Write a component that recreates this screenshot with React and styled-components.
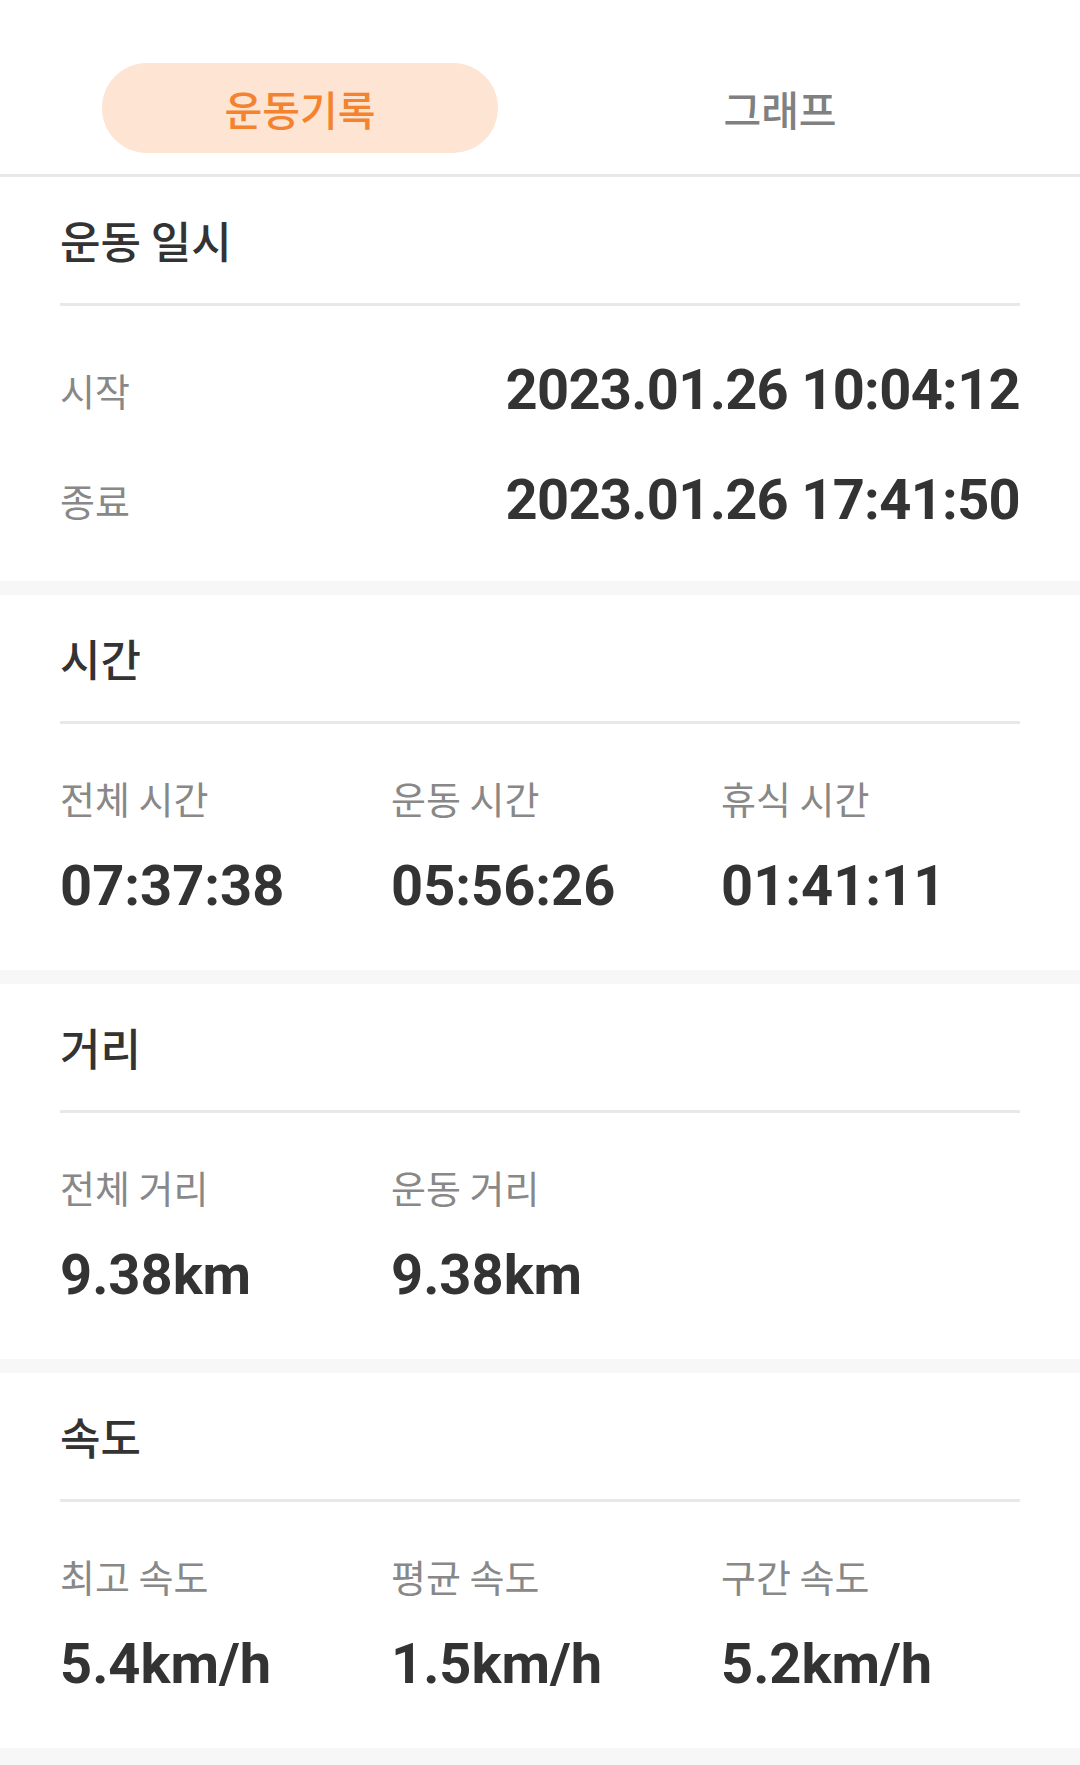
import React from "react";
import styled, { createGlobalStyle } from "styled-components";

const GlobalStyle = createGlobalStyle`
  html, body {
    margin: 0;
    padding: 0;
    background: #f7f7f7;
  }
  body {
    font-family: "Noto Sans CJK KR", "Noto Sans", sans-serif;
    -webkit-font-smoothing: antialiased;
  }
  * { box-sizing: border-box; }
`;

const Page = styled.div`
  width: 1080px;
  min-height: 1765px;
  background: #f7f7f7;
  display: flex;
  flex-direction: column;
  gap: 14px;
`;

const TabBar = styled.nav`
  display: grid;
  grid-template-columns: 1fr 1fr;
  padding: 63px 60px 21px;
  background: #fff;
  border-bottom: 3px solid #e8e8e8;
  margin-bottom: -14px;
`;

const Tab = styled.button`
  justify-self: center;
  width: 396px;
  height: 90px;
  border: none;
  border-radius: 45px;
  background: ${(p) => (p.$active ? "#fde4d3" : "transparent")};
  color: ${(p) => (p.$active ? "#f4832f" : "#808080")};
  font-family: "Noto Sans CJK KR", sans-serif;
  font-size: 41px;
  font-weight: 500;
  line-height: 1;
  padding: 0;
  cursor: pointer;
`;

const Card = styled.section`
  background: #fff;
`;

const CardTitle = styled.h2`
  margin: 0;
  height: 126px;
  padding: 0 60px;
  display: flex;
  align-items: center;
  font-family: "Noto Sans CJK KR", sans-serif;
  font-size: 44px;
  font-weight: 500;
  color: #333;
`;

const Divider = styled.hr`
  margin: 0 60px;
  border: none;
  height: 3px;
  background: #e8e8e8;
`;

const RowList = styled.div`
  display: flex;
  flex-direction: column;
  gap: 50px;
  padding: 54px 60px 51px;
`;

const Row = styled.div`
  display: flex;
  justify-content: space-between;
  align-items: center;
  height: 60px;
`;

const Label = styled.span`
  font-family: "Noto Sans CJK KR", sans-serif;
  font-size: 38px;
  font-weight: 400;
  color: #888;
  line-height: 48px;
`;

const Value = styled.span`
  font-family: Roboto, "Liberation Sans", sans-serif;
  font-size: 56px;
  font-weight: 700;
  color: #333;
  line-height: 60px;
  white-space: nowrap;
  letter-spacing: ${(p) => (p.$tight ? "-0.7px" : "0")};
`;

const StatGrid = styled.div`
  display: grid;
  grid-template-columns: 331px 330px 1fr;
  padding: 50px 60px 54px;
`;

const Stat = styled.div`
  display: flex;
  flex-direction: column;
  gap: 34px;
`;

const sections = [
  {
    title: "시간",
    stats: [
      ["전체 시간", "07:37:38"],
      ["운동 시간", "05:56:26"],
      ["휴식 시간", "01:41:11"],
    ],
  },
  {
    title: "거리",
    stats: [
      ["전체 거리", "9.38km"],
      ["운동 거리", "9.38km"],
    ],
  },
  {
    title: "속도",
    stats: [
      ["최고 속도", "5.4km/h"],
      ["평균 속도", "1.5km/h"],
      ["구간 속도", "5.2km/h"],
    ],
  },
];

export default function App() {
  return (
    <>
      <GlobalStyle />
      <Page>
        <TabBar>
          <Tab $active>운동기록</Tab>
          <Tab>그래프</Tab>
        </TabBar>

        <Card>
          <CardTitle>운동 일시</CardTitle>
          <Divider />
          <RowList>
            <Row>
              <Label>시작</Label>
              <Value $tight>2023.01.26 10:04:12</Value>
            </Row>
            <Row>
              <Label>종료</Label>
              <Value $tight>2023.01.26 17:41:50</Value>
            </Row>
          </RowList>
        </Card>

        {sections.map((s) => (
          <Card key={s.title}>
            <CardTitle>{s.title}</CardTitle>
            <Divider />
            <StatGrid>
              {s.stats.map(([label, value]) => (
                <Stat key={label}>
                  <Label>{label}</Label>
                  <Value>{value}</Value>
                </Stat>
              ))}
            </StatGrid>
          </Card>
        ))}
      </Page>
    </>
  );
}
